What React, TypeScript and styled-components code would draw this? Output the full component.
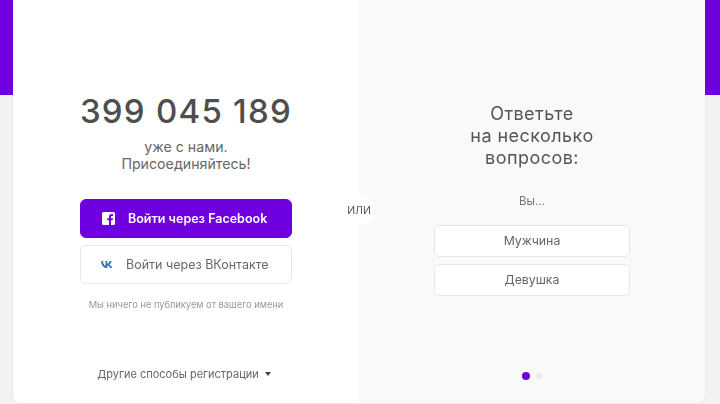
import React from "react";
import styled, { createGlobalStyle } from "styled-components";

const Global = createGlobalStyle`
  html, body { margin: 0; padding: 0; height: 100%; overflow: hidden; }
  body {
    font-family: "Inter", "Noto Sans", sans-serif;
    background: linear-gradient(#6f00e0 95px, #f2f2f2 95px);
    color: #555;
  }
`;

const Page = styled.div`
  width: 720px;
  height: 404px;
  padding: 0 15px 1px 13px;
  box-sizing: border-box;
  filter: blur(0.45px);
`;

const Card = styled.main`
  position: relative;
  display: grid;
  grid-template-columns: 346px 346px;
  height: 403px;
  border-radius: 0 0 8px 8px;
  overflow: hidden;
  box-shadow: 0 0 2px rgba(0, 0, 0, 0.12);
`;

const LeftPanel = styled.section`
  background: #fff;
  display: flex;
  flex-direction: column;
  align-items: center;
  padding-top: 93px;
  box-sizing: border-box;
`;

const RightPanel = styled.section`
  background: #f9f9f9;
  display: flex;
  flex-direction: column;
  align-items: center;
  padding-top: 103px;
  box-sizing: border-box;
`;

const Counter = styled.div`
  font-size: 33px;
  line-height: 36px;
  letter-spacing: 1.25px;
  font-weight: 500;
  color: #4e4e4e;
  white-space: nowrap;
`;

const Tagline = styled.p`
  margin: 9px 0 0;
  font-size: 14.2px;
  line-height: 17px;
  text-align: center;
  color: #666;
`;

const LoginButton = styled.button<{ $primary?: boolean }>`
  display: flex;
  align-items: center;
  box-sizing: border-box;
  width: 212px;
  height: 39px;
  padding: 0;
  padding-left: ${(p) => (p.$primary ? "21px" : "20px")};
  gap: ${(p) => (p.$primary ? "13px" : "14px")};
  margin-top: ${(p) => (p.$primary ? "27px" : "7px")};
  border-radius: 6px;
  border: 1px solid ${(p) => (p.$primary ? "#6f00e0" : "#e6e6e6")};
  background: ${(p) => (p.$primary ? "#6f00e0" : "#fff")};
  color: ${(p) => (p.$primary ? "#fff" : "#666")};
  font: ${(p) => (p.$primary ? 600 : 400)} 12.5px "Inter", "Noto Sans", sans-serif;
`;

const Disclaimer = styled.p`
  margin: 15px 0 0;
  font-size: 9.3px;
  line-height: 12px;
  color: #999;
`;

const OtherWays = styled.div`
  display: flex;
  align-items: center;
  gap: 6px;
  margin: 56px 4px 0 0;
  font-size: 11px;
  line-height: 14px;
  color: #666;
`;

const Caret = styled.span`
  width: 0;
  height: 0;
  border-left: 3.5px solid transparent;
  border-right: 3.5px solid transparent;
  border-top: 4px solid #444;
`;

const OrBadge = styled.div`
  position: absolute;
  left: 330px;
  top: 194px;
  width: 32px;
  height: 32px;
  border-radius: 50%;
  background: #fff;
  display: flex;
  align-items: center;
  justify-content: center;
  font-size: 10.5px;
  color: #555;
`;

const Question = styled.h2`
  margin: 0;
  font-size: 18px;
  font-weight: 400;
  letter-spacing: 0.45px;
  line-height: 22px;
  text-align: center;
  color: #555;
`;

const YouLabel = styled.p`
  margin: 25px 0 0;
  font-size: 11.5px;
  line-height: 14px;
  color: #777;
`;

const Options = styled.div`
  display: flex;
  flex-direction: column;
  gap: 7px;
  margin-top: 17px;
`;

const OptionButton = styled.button`
  width: 196px;
  height: 32px;
  padding: 0 0 2px;
  box-sizing: border-box;
  border: 1px solid #e6e6e6;
  border-radius: 5px;
  background: #fff;
  color: #666;
  font: 400 12.3px "Inter", "Noto Sans", sans-serif;
`;

const Dots = styled.div`
  display: flex;
  align-items: center;
  gap: 6px;
  margin-top: 76px;
`;

const Dot = styled.span<{ $active?: boolean }>`
  width: ${(p) => (p.$active ? 8 : 6)}px;
  height: ${(p) => (p.$active ? 8 : 6)}px;
  border-radius: 50%;
  background: ${(p) => (p.$active ? "#6f00e0" : "#ececec")};
`;

const FacebookIcon = () => (
  <svg width="13" height="13" viewBox="0 0 13 13" aria-hidden="true">
    <path
      fill="#fff"
      d="M1.5 0h10A1.5 1.5 0 0 1 13 1.5v10a1.5 1.5 0 0 1-1.5 1.5H9V8.2h1.7l.3-2H9V5c0-.6.3-1 1-1h1.1V2.2C10.7 2.1 10.2 2 9.6 2 8 2 7 3 7 4.7v1.5H5.3v2H7V13H1.5A1.5 1.5 0 0 1 0 11.5v-10A1.5 1.5 0 0 1 1.5 0Z"
    />
  </svg>
);

const VkIcon = () => (
  <svg width="11" height="7" viewBox="0 0 24 15" aria-hidden="true">
    <path
      fill="#2f6cb3"
      d="M13 15C5 15 .6 9.400 .3 0h4c.2 6.900 3.200 9.800 5.600 10.400V0h3.800v5.900c2.300-.2 4.800-2.900 5.600-5.900h3.800c-.6 3.700-3.300 6.400-5.200 7.500 1.900.9 5 3.200 6.200 7.500h-4.200c-.9-2.800-3.200-5-6.200-5.300V15H13Z"
    />
  </svg>
);

export default function App() {
  return (
    <Page>
      <Global />
      <Card>
        <LeftPanel>
          <Counter>399 045 189</Counter>
          <Tagline>
            уже с нами.
            <br />
            Присоединяйтесь!
          </Tagline>
          <LoginButton $primary>
            <FacebookIcon />
            Войти через Facebook
          </LoginButton>
          <LoginButton>
            <VkIcon />
            Войти через ВКонтакте
          </LoginButton>
          <Disclaimer>Мы ничего не публикуем от вашего имени</Disclaimer>
          <OtherWays>
            Другие способы регистрации
            <Caret />
          </OtherWays>
        </LeftPanel>
        <RightPanel>
          <Question>
            Ответьте
            <br />
            на несколько
            <br />
            вопросов:
          </Question>
          <YouLabel>Вы...</YouLabel>
          <Options>
            <OptionButton>Мужчина</OptionButton>
            <OptionButton>Девушка</OptionButton>
          </Options>
          <Dots>
            <Dot $active />
            <Dot />
          </Dots>
        </RightPanel>
        <OrBadge>ИЛИ</OrBadge>
      </Card>
    </Page>
  );
}
